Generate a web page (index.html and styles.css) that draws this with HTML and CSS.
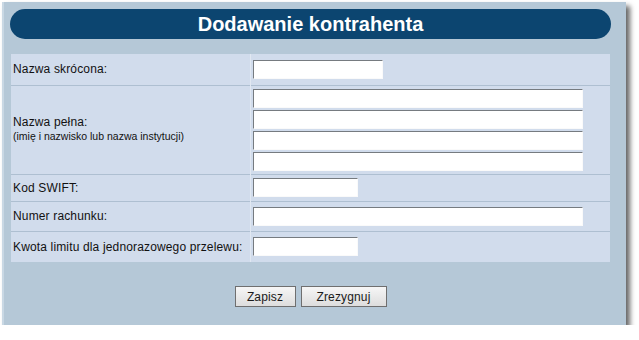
FILE: index.html
```html
<!DOCTYPE html>
<html lang="pl">
<head>
  <meta charset="UTF-8" />
  <title>Dodawanie kontrahenta</title>
  <link rel="stylesheet" href="styles.css">
</head>
<body>
  <div class="okno">
    <div class="naglowek">Dodawanie kontrahenta</div>

    <table class="formularz">
      <tr class="wiersz-1">
        <td class="etykieta">Nazwa skrócona:</td>
        <td class="pole"><input type="text" class="pole-srednie"></td>
      </tr>
      <tr class="wiersz-2">
        <td class="etykieta">
          Nazwa pełna:<br>
          <span class="podpowiedz">(imię i nazwisko lub nazwa instytucji)</span>
        </td>
        <td class="pole pole-stos">
          <input type="text" class="pole-dlugie">
          <input type="text" class="pole-dlugie">
          <input type="text" class="pole-dlugie">
          <input type="text" class="pole-dlugie">
        </td>
      </tr>
      <tr class="wiersz-3">
        <td class="etykieta">Kod SWIFT:</td>
        <td class="pole"><input type="text" class="pole-krotkie"></td>
      </tr>
      <tr class="wiersz-4">
        <td class="etykieta">Numer rachunku:</td>
        <td class="pole"><input type="text" class="pole-dlugie"></td>
      </tr>
      <tr class="wiersz-5">
        <td class="etykieta">Kwota limitu dla jednorazowego przelewu:</td>
        <td class="pole"><input type="text" class="pole-krotkie"></td>
      </tr>
    </table>

    <div class="przyciski">
      <button class="przycisk przycisk-zapisz">Zapisz</button>
      <button class="przycisk przycisk-rezygnuj">Zrezygnuj</button>
    </div>
  </div>
</body>
</html>
```

FILE: styles.css
```css
* {
  box-sizing: border-box;
  margin: 0;
  padding: 0;
}
body, html {
  background: #fff;
  font-family: 'Liberation Sans', Arial, sans-serif;
  font-size: 12px;
  color: #111;
  overflow: hidden;
}
.okno {
  margin: 2px 0 0 2px;
  width: 624px;
  height: 323px;
  background: #b5c8d7;
  border-left: 2px solid #c9d8e4;
  box-shadow: 4px 4px 5px rgba(0, 0, 0, 0.6);
  padding: 7px 0 0 6px;
}
.naglowek {
  width: 601px;
  height: 30px;
  background: #0c4570;
  border-radius: 15px;
  color: #fff;
  font-size: 20px;
  font-weight: bold;
  line-height: 30px;
  text-align: center;
}
.formularz {
  margin: 15px 0 0 1px;
  width: 599px;
  border-collapse: collapse;
  background: #d1dcec;
}
.formularz tr {
  border-bottom: 1px solid #aebfd1;
}
.formularz tr:last-child {
  border-bottom: none;
}
.wiersz-1 { height: 31px; }
.wiersz-2 { height: 89px; }
.wiersz-3 { height: 27px; }
.wiersz-4 { height: 30px; }
.wiersz-5 { height: 31px; }
.etykieta {
  width: 239px;
  padding: 0 2px;
  vertical-align: middle;
  white-space: nowrap;
  letter-spacing: 0.15px;
  color: #111;
}
.podpowiedz {
  font-size: 10.5px;
  line-height: 15px;
  letter-spacing: 0;
}
.pole {
  border-left: 1px solid #e1e8f2;
  padding: 0 0 0 2px;
  vertical-align: middle;
}
.pole-stos {
  padding-top: 3px;
  padding-bottom: 3px;
}
.pole-stos input {
  margin-bottom: 2px;
}
.pole-stos input:last-child {
  margin-bottom: 0;
}
input {
  display: block;
  height: 19px;
  background: #fff;
  border: 1px solid #fafafa;
  border-top-color: #767b80;
  border-left-color: #767b80;
  font-family: inherit;
  font-size: 12px;
}
.pole-srednie { width: 130px; }
.pole-dlugie { width: 330px; }
.pole-krotkie { width: 105px; }
.przyciski {
  display: flex;
  justify-content: center;
  gap: 5px;
  width: 599px;
  margin: 24px 0 0 1px;
}
.przycisk {
  height: 21px;
  padding: 0;
  border: 1px solid #6f6f6f;
  background: linear-gradient(#f6f6f6, #dddddd);
  font-family: inherit;
  font-size: 12px;
  letter-spacing: 0.15px;
  color: #1a1a1a;
}
.przycisk-zapisz { width: 61px; }
.przycisk-rezygnuj { width: 86px; }
```
